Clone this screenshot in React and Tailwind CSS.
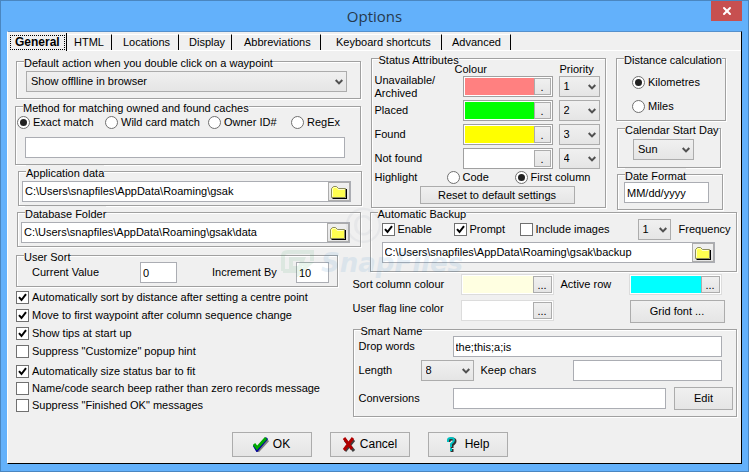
import clsx from 'clsx'
import { X } from 'lucide-react'

const tabs = [
  { name: 'HTML', width: 'w-[45px] pl-[7px]' },
  { name: 'Locations', width: 'w-[67px] pl-[11px]' },
  { name: 'Display', width: 'w-[53px] pl-[10px]' },
  { name: 'Abbreviations', width: 'w-[89px] pl-[12px]' },
  { name: 'Keyboard shortcuts', width: 'w-[121px] pl-[15px]' },
  { name: 'Advanced', width: 'w-[69px] pl-[10px]' },
]

const statuses = [
  { name: 'Unavailable/ Archived', color: 'bg-[#ff8080]', priority: '1' },
  { name: 'Placed', color: 'bg-[#00ff00]', priority: '2' },
  { name: 'Found', color: 'bg-[#ffff00]', priority: '3' },
  { name: 'Not found', color: 'bg-white', priority: '4' },
]

const buttonLook = 'border border-[#acacac] bg-linear-to-b from-[#f0f0f0] to-[#e5e5e5]'

function Group({ title, className, children }) {
  return (
    <fieldset
      className={clsx(
        'min-w-0 border border-[#a0a0a0] shadow-[1px_1px_0_#fff,inset_1px_1px_0_#fff]',
        className,
      )}
    >
      <legend className="ml-[7px] h-[13px] bg-[#f0f0f0] leading-[16px] whitespace-nowrap">{title}</legend>
      {children}
    </fieldset>
  )
}

function Field({ className, ...props }) {
  return (
    <input
      type="text"
      className={clsx('h-[21px] min-w-0 border border-[#abadb3] bg-white px-[2px] outline-none', className)}
      {...props}
    />
  )
}

function Select({ label, options, className }) {
  return (
    <span className={clsx('relative block h-[21px] shrink-0', className)}>
      <select aria-label={label} className={clsx('block size-full appearance-none pl-1', buttonLook)}>
        {options.map((o) => (
          <option key={o}>{o}</option>
        ))}
      </select>
      <svg viewBox="0 0 8 6" className="pointer-events-none absolute top-[8px] right-[4px] h-[6px] w-[8px]">
        <path d="M0.7 1 4 4.4 7.3 1" fill="none" stroke="#505050" strokeWidth="2" />
      </svg>
    </span>
  )
}

function Check({ label, checked, className }) {
  return (
    <label className={clsx('flex h-[13px] items-center gap-[3px] whitespace-nowrap', className)}>
      <span className="relative block size-[13px] shrink-0">
        <input
          type="checkbox"
          defaultChecked={checked}
          className="peer block size-[13px] appearance-none border border-[#707070] bg-white"
        />
        <svg viewBox="0 0 13 13" className="pointer-events-none absolute inset-0 hidden size-[13px] peer-checked:block">
          <path d="M3 6.2 5.5 9 10 3.2" fill="none" stroke="#000" strokeWidth="2" />
        </svg>
      </span>
      {label}
    </label>
  )
}

function Radio({ label, name, checked, className }) {
  return (
    <label className={clsx('flex h-[13px] items-center gap-[3px] whitespace-nowrap', className)}>
      <input
        type="radio"
        name={name}
        defaultChecked={checked}
        className="grid size-[13px] shrink-0 appearance-none place-content-center rounded-full border border-[#707070] bg-white before:size-[7px] before:rounded-full checked:before:bg-[#212121]"
      />
      {label}
    </label>
  )
}

function ColorBox({ color, label, dots, className }) {
  return (
    <div className={clsx('flex h-[21px] border bg-white p-px', className)}>
      <span className={clsx('flex-1', color)} />
      <button
        aria-label={label}
        className={clsx('leading-[14px]', dots === '.' ? 'w-[17px]' : 'w-[19px]', buttonLook)}
      >
        {dots}
      </button>
    </div>
  )
}

function PathField({ label, value, className }) {
  return (
    <div className={clsx('flex h-[21px] border border-[#abadb3] bg-white', className)}>
      <input aria-label={label} defaultValue={value} className="min-w-0 flex-1 px-[2px] outline-none" />
      <button aria-label={`Browse ${label}`} className={clsx('grid w-[22px] place-items-center', buttonLook)}>
        <svg viewBox="0 0 16 14" className="h-[14px] w-[16px]">
          <path d="M2 13h13V4h1v10H2z" fill="#000" />
          <path d="M0.5 12.5v-9l2-2h3l2 2h7v9z" fill="#ffff50" stroke="#8c8c60" />
          <path d="M1.5 11.5v-7.500l1.500-1.500h2.500l1.500 2h6.500" fill="none" stroke="#ffffc8" />
          <path d="M15.5 4v9.5H1.500" fill="none" stroke="#000" />
        </svg>
      </button>
    </div>
  )
}

function PushButton({ className, children }) {
  return (
    <button className={clsx('flex items-center justify-center whitespace-nowrap', buttonLook, className)}>
      {children}
    </button>
  )
}

function TitleBar() {
  return (
    <header className="relative flex h-[30px] items-center justify-center">
      <h1 className="font-['Open_Sans',sans-serif] text-[15px] text-[#26394d]">Options</h1>
      <button aria-label="Close" className="absolute top-0 right-0 grid h-5 w-[31px] place-items-center bg-[#c75050] text-white">
        <X size={12} strokeWidth={4} />
      </button>
    </header>
  )
}

function Tabs() {
  return (
    <nav className="flex h-[19px] items-end">
      <button className="flex h-[18px] w-[59px] items-center border-r border-black pl-[2px] font-bold">
        <span className="border border-dotted border-black px-1 text-[12px] leading-[13px]">General</span>
      </button>
      <div className="flex h-[18px] flex-1 border-b border-white pt-px">
        {tabs.map((t) => (
          <button
            key={t.name}
            className={clsx('h-4 border-t border-r border-t-white border-r-black text-left leading-[15px] whitespace-nowrap', t.width)}
          >
            {t.name}
          </button>
        ))}
      </div>
    </nav>
  )
}

function LeftColumn() {
  return (
    <div className="flex min-w-0 flex-[338_1_0%] flex-col pt-[3px]">
      <Group title="Default action when you double click on a waypoint" className="mr-[-8px] ml-px h-[44px]">
        <Select label="Default action" options={['Show offlline in browser']} className="mt-[3px] mr-[13px] ml-[9px]" />
      </Group>

      <Group title="Method for matching owned and found caches" className="mt-px mr-[-8px] h-[65px]">
        <div className="mt-[3px] flex pl-px">
          <Radio name="match" label="Exact match" checked className="w-[88px]" />
          <Radio name="match" label="Wild card match" className="w-[103px]" />
          <Radio name="match" label="Owner ID#" className="w-[83px]" />
          <Radio name="match" label="RegEx" />
        </div>
        <div className="mt-2 flex pr-[15px] pl-[9px]">
          <Field aria-label="Match expression" className="flex-1" />
        </div>
      </Group>

      <Group title="Application data" className="mr-[-9px] ml-[3px] h-[41px]">
        <PathField
          label="Application data"
          value="C:\Users\snapfiles\AppData\Roaming\gsak"
          className="mt-[3px] mr-[10px] ml-[3px]"
        />
      </Group>

      <Group title="Database Folder" className="mr-[-8px] ml-[2px] h-[41px]">
        <PathField
          label="Database Folder"
          value="C:\Users\snapfiles\AppData\Roaming\gsak\data"
          className="mt-[3px] mr-[10px] ml-[3px]"
        />
      </Group>

      <Group title="User Sort" className="mt-[2px] mr-[15px] ml-px h-[38px]">
        <div className="flex items-center pl-[15px]">
          <label htmlFor="current" className="w-[108px]">Current Value</label>
          <Field id="current" defaultValue="0" className="w-[37px]" />
          <label htmlFor="increment" className="ml-[35px] w-[84px]">Increment By</label>
          <Field id="increment" defaultValue="10" className="w-[33px]" />
        </div>
      </Group>

      <div className="mt-1 ml-px flex flex-col gap-[5px]">
        <Check label="Automatically sort by distance after setting a centre point" checked />
        <Check label="Move to first waypoint after column sequence change" checked />
        <Check label="Show tips at start up" checked />
        <Check label={'Suppress "Customize" popup hint'} />
      </div>
      <div className="mt-[7px] ml-px flex flex-col gap-[4px]">
        <Check label="Automatically size status bar to fit" checked />
        <Check label="Name/code search beep rather than zero records message" />
        <Check label={'Suppress "Finished OK" messages'} />
      </div>
    </div>
  )
}

function StatusAttributes() {
  return (
    <Group title="Status Attributes" className="relative z-10 h-[156px] w-[235px]">
      <div className="flex h-[11px] items-start pl-[83px] leading-[9px]">
        <span className="w-[105px]">Colour</span>
        <span>Priority</span>
      </div>
      <div className="flex flex-col gap-[3px] pl-[3px]">
        {statuses.map((s) => (
          <div key={s.name} className="flex h-[21px] items-center">
            <span className="w-[88px] pr-4 leading-[13px]">{s.name}</span>
            <ColorBox color={s.color} label={`${s.name} colour`} dots="." className="w-[90px] border-[#a0a0a0]" />
            <Select label={`${s.name} priority`} options={[s.priority]} className="ml-[6px] w-[41px]" />
          </div>
        ))}
      </div>
      <div className="mt-[2px] flex h-[13px] items-center pl-[3px]">
        <span className="w-[72px]">Highlight</span>
        <Radio name="highlight" label="Code" className="w-[68px]" />
        <Radio name="highlight" label="First column" checked />
      </div>
      <PushButton className="mt-[2px] ml-[48px] h-[18px] w-[155px]">Reset to default settings</PushButton>
    </Group>
  )
}

function AutomaticBackup() {
  return (
    <Group title="Automatic Backup" className="mt-[-4px] ml-[17px] h-[66px]">
      <div className="flex h-[21px] items-center pl-[11px]">
        <Check label="Enable" checked className="w-[72px]" />
        <Check label="Prompt" checked className="w-[66px]" />
        <Check label="Include images" className="w-[118px]" />
        <Select label="Frequency" options={['1']} className="w-[33px]" />
        <span className="ml-2">Frequency</span>
      </div>
      <PathField
        label="Backup folder"
        value="C:\Users\snapfiles\AppData\Roaming\gsak\backup"
        className="mt-[2px] mr-[21px] ml-[11px]"
      />
    </Group>
  )
}

function SmartName() {
  return (
    <Group title="Smart Name" className="h-[94px]">
      <div className="flex items-center pl-[5px]">
        <label htmlFor="drop" className="w-[94px]">Drop words</label>
        <Field id="drop" defaultValue="the;this;a;is" className="mr-[14px] flex-1" />
      </div>
      <div className="mt-[3px] flex items-center pl-[5px]">
        <span className="w-[62px]">Length</span>
        <Select label="Length" options={['8']} className="w-[53px]" />
        <label htmlFor="keep" className="ml-[7px] w-[92px]">Keep chars</label>
        <Field id="keep" className="mr-[14px] flex-1" />
      </div>
      <div className="mt-[6px] flex items-center pl-[5px]">
        <label htmlFor="conversions" className="w-[94px]">Conversions</label>
        <Field id="conversions" className="flex-1" />
        <PushButton className="mr-[3px] ml-2 h-[23px] w-[59px]">Edit</PushButton>
      </div>
    </Group>
  )
}

function RightColumn() {
  return (
    <div className="flex min-w-0 flex-[385_1_0%] flex-col">
      <div className="flex justify-between pr-[11px] pl-[18px]">
        <StatusAttributes />
        <div className="flex flex-col">
          <Group title="Distance calculation" className="h-[69px] w-[110px]">
            <div className="mt-[11px] flex flex-col gap-[11px] pl-[15px]">
              <Radio name="distance" label="Kilometres" checked />
              <Radio name="distance" label="Miles" />
            </div>
          </Group>
          <Group title="Calendar Start Day" className="mt-px ml-px h-[46px] w-[104px]">
            <Select label="Calendar Start Day" options={['Sun']} className="mt-1 ml-[15px] w-[61px]" />
          </Group>
          <Group title="Date Format" className="ml-px h-[42px] w-[106px]">
            <Field aria-label="Date Format" defaultValue="MM/dd/yyyy" className="mt-px ml-[6px] block w-[85px]" />
          </Group>
        </div>
      </div>
      <AutomaticBackup />
      <div className="mt-[2px] flex items-center">
        <span className="w-[108px]">Sort column colour</span>
        <ColorBox color="bg-[#ffffe1]" label="Sort column colour" dots="..." className="w-[93px] border-[#dcdcdc]" />
        <span className="ml-[7px] w-[68px]">Active row</span>
        <ColorBox color="bg-[#00ffff]" label="Active row colour" dots="..." className="w-[93px] border-[#dcdcdc]" />
      </div>
      <div className="mt-[5px] flex items-start">
        <span className="w-[108px] leading-[17px]">User flag line color</span>
        <ColorBox color="bg-white" label="User flag line color" dots="..." className="w-[93px] border-[#dcdcdc]" />
        <PushButton className="ml-[76px] h-[23px] w-[95px]">Grid font ...</PushButton>
      </div>
      <SmartName />
    </div>
  )
}

function Watermark() {
  return (
    <div className="pointer-events-none absolute top-[174px] left-[271px] opacity-10">
      <span className="ml-[66px] block h-[43px] font-['Liberation_Sans',sans-serif] text-[50px] leading-[40px] text-gray-400">©</span>
      <span className="flex items-center gap-1">
        <svg viewBox="0 0 38 28" className="h-7 w-[38px]">
          <path d="M9 3h24v9M4 22V7q0-4 5-4M4 22h16M12 10h12l-2 5h8L20 24l1-5h-9z" fill="none" stroke="#35a35a" strokeWidth="4" />
        </svg>
        <span className="font-['DejaVu_Sans',sans-serif] text-[26px] leading-[20px] font-bold text-[#2a7fc4] italic">SnapFiles</span>
      </span>
    </div>
  )
}

export default function App() {
  return (
    <div className="flex min-h-screen flex-col border border-[#4a86c0] bg-[#63b1fb] px-[6px] pb-[7px] font-['Liberation_Sans',sans-serif] text-[11px] leading-[13px] text-black">
      <TitleBar />
      <main className="relative flex flex-1 flex-col border border-t-[#5590cc] border-r-black border-b-black border-l-white bg-[#f0f0f0]">
        <Tabs />
        <div className="flex pt-px pr-[4px] pl-[7px]">
          <LeftColumn />
          <RightColumn />
        </div>
        <footer className="mt-auto mb-[6px] flex justify-center gap-[18px] pr-[10px] text-[12px]">
          <PushButton className="h-[25px] w-20 gap-1">
            <svg viewBox="0 0 16 15" className="h-[15px] w-[16px]">
              <path d="M2 9l3 5L15 3" fill="none" stroke="#808080" strokeWidth="3" />
              <path d="M1 8l3 5L14 1" fill="none" stroke="#0000a0" strokeWidth="3" />
              <path d="M1 7l3 4L13 1" fill="none" stroke="#00a800" strokeWidth="3" />
            </svg>
            OK
          </PushButton>
          <PushButton className="h-[25px] w-20 gap-1">
            <svg viewBox="0 0 14 15" className="h-[15px] w-[14px]">
              <path d="M3 3l9 11M12 3L3 14" fill="none" stroke="#404040" strokeWidth="3" />
              <path d="M2 1l8 11M11 1L2 13" fill="none" stroke="#b00000" strokeWidth="3" />
            </svg>
            Cancel
          </PushButton>
          <PushButton className="h-[25px] w-20 gap-2">
            <svg viewBox="0 0 11 15" className="h-[15px] w-[11px]">
              <path d="M3 5V4q0-2 3-2t3 2q0 2-3 4v3M6 12v3" fill="none" stroke="#303030" strokeWidth="3" />
              <path d="M2 5V3q0-2 3-2t3 2q0 2-3 4v3M5 11v3" fill="none" stroke="#00c0c0" strokeWidth="2" />
            </svg>
            Help
          </PushButton>
        </footer>
        <Watermark />
      </main>
    </div>
  )
}
